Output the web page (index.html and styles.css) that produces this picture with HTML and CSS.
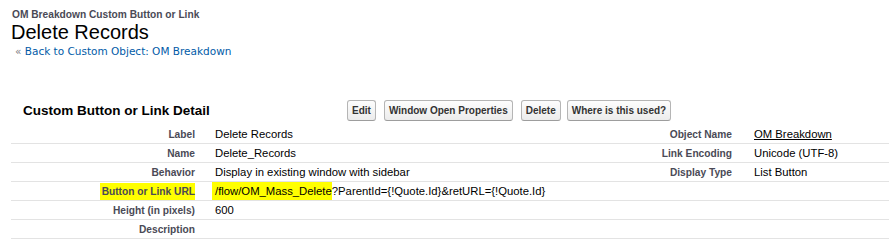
FILE: index.html
```html
<!DOCTYPE html>
<html lang="en">
<head>
  <meta charset="UTF-8">
  <title>Delete Records</title>
  <link rel="stylesheet" href="styles.css">
</head>
<body>
  <div class="page-head">
    <h1 class="page-type">OM Breakdown Custom Button or Link</h1>
    <h2 class="page-title">Delete Records</h2>
    <div class="back"><span class="raquo">&laquo;</span> <a href="#">Back to Custom Object: OM Breakdown</a></div>
  </div>

  <div class="block">
    <div class="block-head">
      <h2 class="block-title">Custom Button or Link Detail</h2>
      <div class="buttons">
        <button class="btn">Edit</button>
        <button class="btn">Window Open Properties</button>
        <button class="btn">Delete</button>
        <button class="btn">Where is this used?</button>
      </div>
    </div>
    <table class="detail">
      <colgroup>
        <col class="c-label">
        <col class="c-data">
        <col class="c-label2">
        <col>
      </colgroup>
      <tr>
        <td class="label">Label</td>
        <td class="data">Delete Records</td>
        <td class="label">Object Name</td>
        <td class="data second"><a class="obj" href="#">OM Breakdown</a></td>
      </tr>
      <tr>
        <td class="label">Name</td>
        <td class="data">Delete_Records</td>
        <td class="label">Link Encoding</td>
        <td class="data second">Unicode (UTF-8)</td>
      </tr>
      <tr>
        <td class="label">Behavior</td>
        <td class="data">Display in existing window with sidebar</td>
        <td class="label">Display Type</td>
        <td class="data second">List Button</td>
      </tr>
      <tr>
        <td class="label"><mark>Button or Link URL</mark></td>
        <td class="data wide" colspan="3"><mark>/flow/OM_Mass_Delete</mark>?ParentId={!Quote.Id}&amp;retURL={!Quote.Id}</td>
      </tr>
      <tr>
        <td class="label">Height (in pixels)</td>
        <td class="data" colspan="3">600</td>
      </tr>
      <tr>
        <td class="label">Description</td>
        <td class="data" colspan="3"></td>
      </tr>
    </table>
  </div>
</body>
</html>
```

FILE: styles.css
```css
body {
  margin: 0;
  padding: 0;
  background-color: white;
  font-family: Arial, "Liberation Sans", sans-serif;
  color: #000;
}
.page-head {
  padding: 9px 0 0 11px;
  height: 86px;
}
.page-type {
  margin: 0 0 0 1px;
  font-size: 10.2px;
  font-weight: bold;
  color: #4a4a56;
  line-height: 12px;
}
.page-title {
  margin: 0;
  font-size: 20px;
  font-weight: normal;
  line-height: 22px;
}
.back {
  margin: 2px 0 0 4px;
  font-family: "DejaVu Sans", Verdana, sans-serif;
  font-size: 10.5px;
  line-height: 13px;
}
.raquo {
  color: #7d7d84;
}
.back a {
  color: #015ba7;
  text-decoration: none;
}
.block {
  margin-left: 11px;
}
.block-head {
  display: flex;
  align-items: center;
  height: 30px;
}
.block-title {
  margin: 0 0 0 12px;
  width: 324px;
  font-size: 13.5px;
  font-weight: bold;
  color: #000;
}
.buttons {
  display: flex;
  gap: 8px;
}
.btn {
  height: 21px;
  padding: 0 4px;
  font-family: Arial, "Liberation Sans", sans-serif;
  font-size: 10px;
  font-weight: bold;
  color: #333;
  background: linear-gradient(#fdfdfd, #ececec);
  border: 1px solid #b5b5b5;
  border-bottom-color: #9d9d9d;
  border-radius: 3px;
}
.btn:last-child {
  margin-left: -2px;
}
.detail {
  width: 878px;
  border-collapse: collapse;
  table-layout: fixed;
}
.c-label { width: 194px; }
.c-data { width: 355px; }
.c-label2 { width: 182px; }
.detail td {
  height: 18px;
  padding: 0;
  border-bottom: 1px solid #e3e3e3;
  white-space: nowrap;
}
.label {
  padding-right: 10px !important;
  text-align: right;
  font-size: 10.2px;
  font-weight: bold;
  color: #4a4a56;
}
.data {
  padding-left: 10px !important;
  font-size: 11.3px;
}
.data.second {
  padding-left: 12px !important;
}
mark {
  background: #ffff00;
  color: inherit;
  padding: 3px 0;
}
.label mark {
  padding: 3px 0 3px 2px;
}
.wide mark {
  margin-left: -3px;
  padding-left: 3px;
}
.obj {
  color: #000;
  text-decoration: underline;
}
```
